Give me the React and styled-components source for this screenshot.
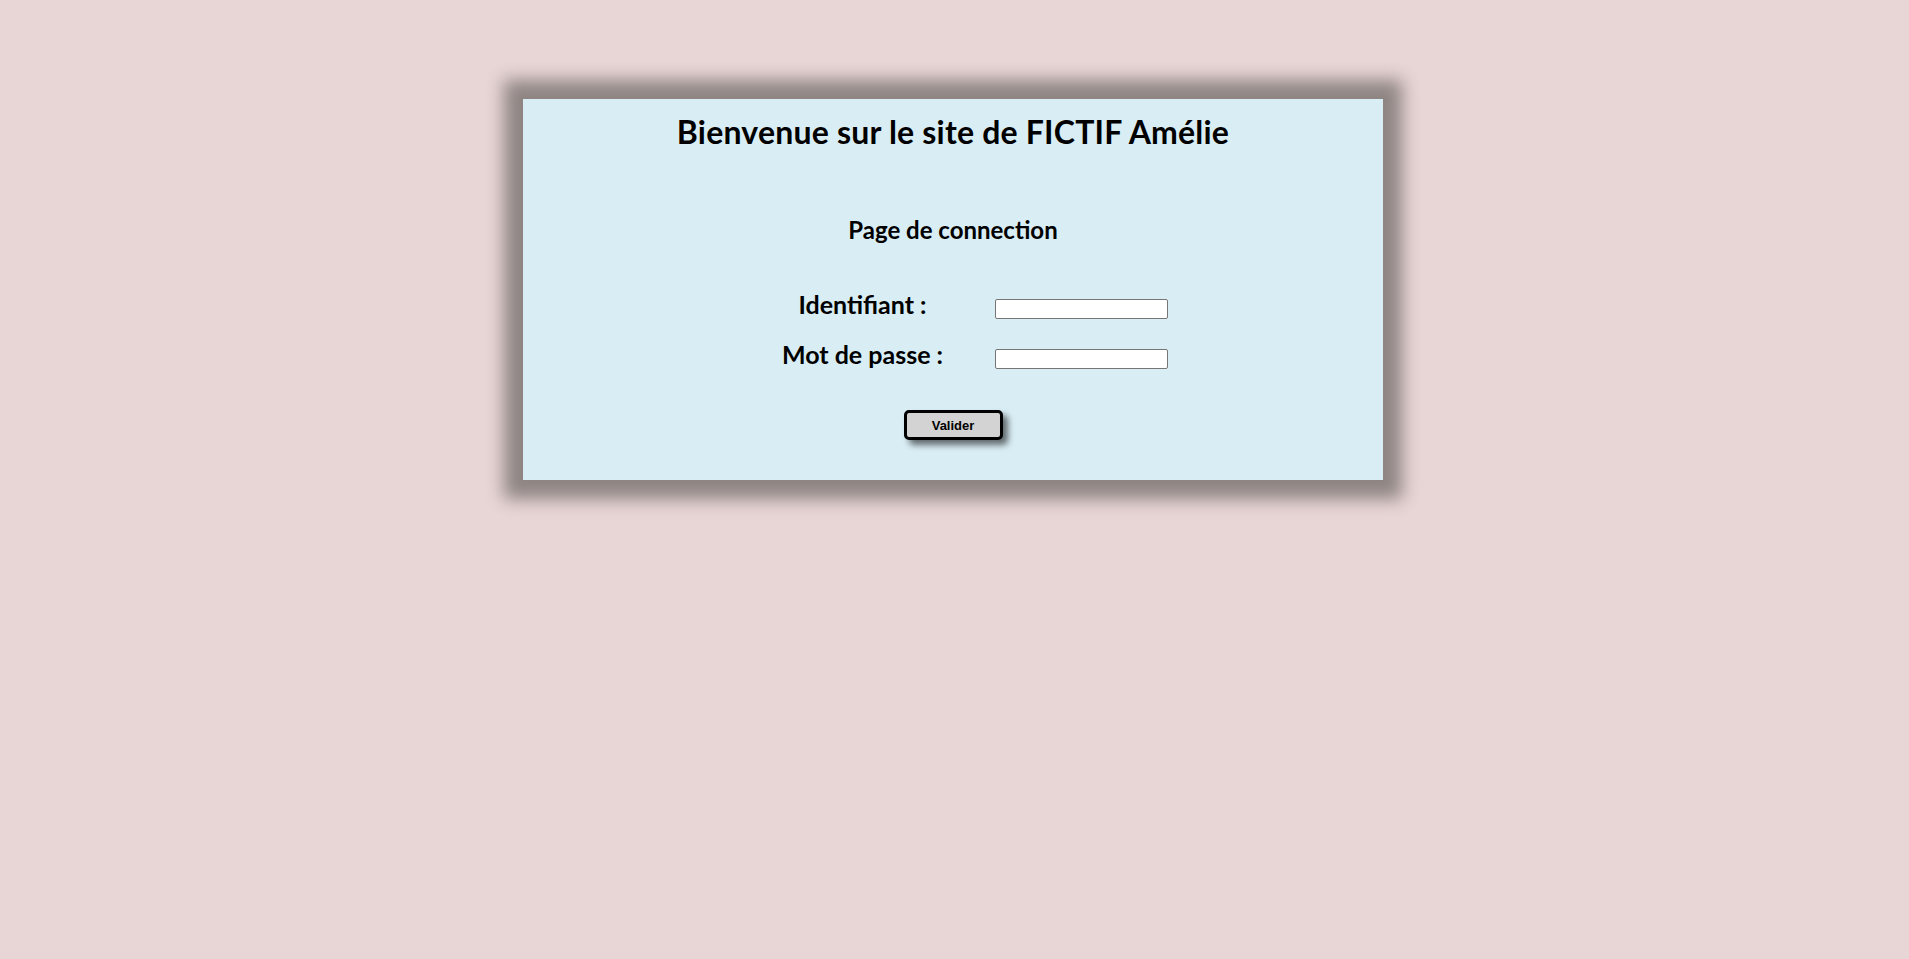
import React from 'react';
import styled, { createGlobalStyle } from 'styled-components';

const GlobalStyle = createGlobalStyle`
  html, body {
    margin: 0;
    padding: 0;
    background: #e8d5d5;
  }
  body {
    font-family: Lato, "Noto Sans", sans-serif;
    color: #000;
  }
`

const Page = styled.div`
  min-height: 100vh;
  padding: 99px 3px 0 0;
  box-sizing: border-box;
`

const Card = styled.main`
  width: 860px;
  height: 381px;
  box-sizing: border-box;
  margin: 0 auto;
  padding-top: 15px;
  background: #d9edf4;
  box-shadow: 0 0 16px 19px #8f8684;
  display: flex;
  flex-direction: column;
  align-items: center;
`

const Title = styled.h1`
  margin: 0;
  font-size: 32px;
  line-height: 36px;
  letter-spacing: 0.2px;
  font-weight: 700;
  text-align: center;
`

const Subtitle = styled.h2`
  margin: 66px 0 0;
  font-size: 24px;
  line-height: 28px;
  font-weight: 700;
  text-align: center;
`

const Form = styled.form`
  margin-top: 55px;
  display: flex;
  flex-direction: column;
  align-items: center;
`

const FieldGrid = styled.div`
  display: grid;
  grid-template-columns: 248px 173px;
  grid-auto-rows: 20px;
  column-gap: 8px;
  row-gap: 30px;
  align-items: center;
`

const Label = styled.label`
  text-align: center;
  font-size: 25px;
  line-height: 20px;
  font-weight: 700;
  margin-bottom: 10px;
  white-space: nowrap;
`

const Input = styled.input`
  width: 173px;
  height: 20px;
  box-sizing: border-box;
  margin: 0;
  padding: 1px 2px;
  border: 1px solid #767676;
  border-radius: 2px;
  background: #fff;
  font-family: "Liberation Sans", Arial, sans-serif;
  font-size: 13px;
`

const SubmitButton = styled.button`
  margin-top: 41px;
  width: 99px;
  height: 30px;
  box-sizing: border-box;
  border: 3px solid #000;
  border-radius: 5px;
  background: #d3d3d3;
  box-shadow: 5px 5px 6px rgba(0, 0, 0, 0.55);
  font-family: "Liberation Sans", Arial, sans-serif;
  font-size: 13px;
  font-weight: 700;
  color: #000;
  cursor: pointer;
`

const App = () => {
  return (
    <>
      <GlobalStyle />
      <Page>
        <Card>
          <Title>Bienvenue sur le site de FICTIF Amélie</Title>
          <Subtitle>Page de connection</Subtitle>
          <Form onSubmit={(e) => e.preventDefault()}>
            <FieldGrid>
              <Label htmlFor="login">Identifiant :</Label>
              <Input id="login" type="text" />
              <Label htmlFor="password">Mot de passe :</Label>
              <Input id="password" type="password" />
            </FieldGrid>
            <SubmitButton type="submit">Valider</SubmitButton>
          </Form>
        </Card>
      </Page>
    </>
  )
}

export default App;
